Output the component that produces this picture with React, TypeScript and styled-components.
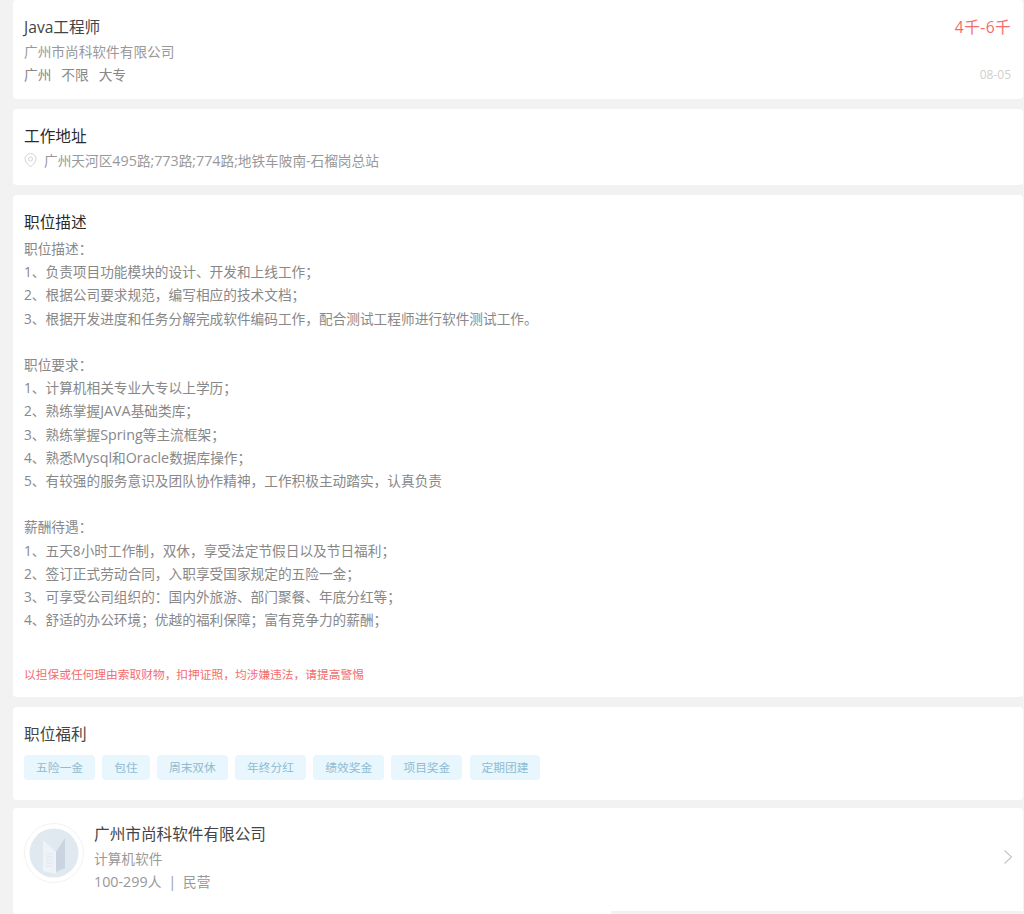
import React from "react";
import styled, { createGlobalStyle } from "styled-components";

const GlobalStyle = createGlobalStyle`
  html, body {
    margin: 0;
    padding: 0;
    height: 914px;
    overflow: hidden;
    background: #f2f2f2;
    font-family: "Open Sans", "Noto Sans CJK SC", sans-serif;
  }
`;

const Page = styled.div`
  display: flex;
  flex-direction: column;
  gap: 10px;
  height: 914px;
  padding: 0 1px 0 13px;
  box-sizing: border-box;
  overflow: hidden;
`;

const Card = styled.section<{ $height: number }>`
  flex: none;
  box-sizing: border-box;
  height: ${({ $height }) => $height}px;
  padding: 15px 12px 0 11px;
  border-radius: 4px;
  background: #fff;
`;

const CompanyCard = styled(Card)`
  margin-top: -2px;
  padding-top: 16px;
`;

const HeaderRow = styled.div`
  display: flex;
  justify-content: space-between;
  align-items: flex-start;
`;

const JobTitle = styled.h1`
  margin: 0;
  font-size: 15.63px;
  line-height: 24px;
  font-weight: 400;
  color: #444;
`;

const Salary = styled.div`
  font-size: 15.63px;
  line-height: 24px;
  letter-spacing: 0.4px;
  color: #f56c6c;
`;

const Muted = styled.div`
  font-size: 13.68px;
  line-height: 23px;
  color: #999;
`;

const CompanyLine = styled(Muted)`
  margin-top: 1px;
  margin-bottom: -1px;
`;

const MetaRow = styled.div`
  display: flex;
  justify-content: space-between;
  align-items: flex-end;
`;

const MetaList = styled.div`
  display: flex;
  gap: 10px;
  font-size: 13.68px;
  line-height: 23px;
  margin-top: 1px;
  color: #888;
`;

const DateText = styled.div`
  font-size: 12px;
  line-height: 23px;
  color: #d0d0d0;
`;

const SectionTitle = styled.h2<{ $soft?: boolean }>`
  margin: 0;
  font-size: 15.63px;
  line-height: 24px;
  font-weight: 400;
  color: ${({ $soft }) => ($soft ? "#444" : "#2a2a2a")};
`;

const Address = styled.div`
  display: flex;
  align-items: center;
  gap: 7px;
  margin-top: 1px;
  font-size: 13.68px;
  line-height: 23px;
  color: #999;
`;

const Description = styled.div`
  margin-top: 3px;
  font-size: 13.68px;
  line-height: 23.2px;
  color: #888;
  white-space: pre-line;
`;

// Latin runs are set a touch larger than the CJK text around them
const Latin = styled.span`
  font-size: 14.3px;
`;

const Warning = styled.div`
  margin-top: 33px;
  font-size: 11.72px;
  line-height: 20px;
  color: #f56c6c;
`;

const Tags = styled.div`
  display: flex;
  gap: 7.3px;
  margin-top: 9px;
`;

const Tag = styled.span`
  padding: 0 12px;
  height: 25px;
  border-radius: 4px;
  background: #e8f6fd;
  font-size: 11.72px;
  line-height: 25px;
  color: #8fbcd2;
`;

const CompanyRow = styled.div`
  display: flex;
  align-items: flex-start;
  gap: 10px;
`;

const Logo = styled.div`
  flex: none;
  box-sizing: border-box;
  display: flex;
  align-items: center;
  justify-content: center;
  width: 60px;
  height: 60px;
  margin-top: -1px;
  border: 1px solid #f4f2f0;
  border-radius: 50%;
`;

const CompanyInfo = styled.div`
  flex: 1;
  margin-top: -3px;
`;

const CompanyName = styled.div`
  font-size: 15.63px;
  line-height: 26px;
  color: #444;
`;

const Chevron = styled.svg`
  flex: none;
  margin: 25px -2px 0 0;
`;

const BottomEdge = styled.div`
  position: fixed;
  left: 611px;
  right: 0;
  bottom: 0;
  height: 3px;
  background: #f2f2f2;
`;

const description = `职位描述：
1、负责项目功能模块的设计、开发和上线工作；
2、根据公司要求规范，编写相应的技术文档；
3、根据开发进度和任务分解完成软件编码工作，配合测试工程师进行软件测试工作。

职位要求：
1、计算机相关专业大专以上学历；
2、熟练掌握JAVA基础类库；
3、熟练掌握Spring等主流框架；
4、熟悉Mysql和Oracle数据库操作；
5、有较强的服务意识及团队协作精神，工作积极主动踏实，认真负责

薪酬待遇：
1、五天8小时工作制，双休，享受法定节假日以及节日福利；
2、签订正式劳动合同，入职享受国家规定的五险一金；
3、可享受公司组织的：国内外旅游、部门聚餐、年底分红等；
4、舒适的办公环境；优越的福利保障；富有竞争力的薪酬；`;

const benefits = ["五险一金", "包住", "周末双休", "年终分红", "绩效奖金", "项目奖金", "定期团建"];

const withLatin = (text: string) =>
  text.split(/([A-Za-z]{2,}|\d{2,})/).map((part, i) => (i % 2 ? <Latin key={i}>{part}</Latin> : part));

export default function App() {
  return (
    <>
      <GlobalStyle />
      <Page>
        <Card $height={99}>
          <HeaderRow>
            <JobTitle>Java工程师</JobTitle>
            <Salary>4千-6千</Salary>
          </HeaderRow>
          <CompanyLine>广州市尚科软件有限公司</CompanyLine>
          <MetaRow>
            <MetaList>
              <span>广州</span>
              <span>不限</span>
              <span>大专</span>
            </MetaList>
            <DateText>08-05</DateText>
          </MetaRow>
        </Card>
        <Card $height={76}>
          <SectionTitle>工作地址</SectionTitle>
          <Address>
            <svg width="13" height="15" viewBox="0 0 13 15" fill="none" stroke="#d4d4d4" strokeWidth="1">
              <path d="M6.5 14C3.5 11 1 8.6 1 6a5.5 5.5 0 0 1 11 0c0 2.6-2.5 5-5.5 8Z" />
              <circle cx="6.5" cy="6" r="2" />
            </svg>
            <span>{withLatin("广州天河区495路;773路;774路;地铁车陂南-石榴岗总站")}</span>
          </Address>
        </Card>
        <Card $height={502}>
          <SectionTitle>职位描述</SectionTitle>
          <Description>{withLatin(description)}</Description>
          <Warning>以担保或任何理由索取财物，扣押证照，均涉嫌违法，请提高警惕</Warning>
        </Card>
        <Card $height={93}>
          <SectionTitle $soft>职位福利</SectionTitle>
          <Tags>
            {benefits.map((b) => (
              <Tag key={b}>{b}</Tag>
            ))}
          </Tags>
        </Card>
        <CompanyCard $height={106}>
          <CompanyRow>
            <Logo>
              <svg width="50" height="50" viewBox="0 0 50 50">
                <circle cx="25" cy="25" r="24.5" fill="#e0e8f0" />
                <path d="M14 12 L27 24 V46 L14 43 Z" fill="#eef3f8" />
                <path d="M27 24 L36 10 V40 L27 44 Z" fill="#c9d4e0" />
                <path d="M17 26h7M17 29h7M17 32h7M17 35h7M17 38h7" stroke="#dfe7ef" strokeWidth="1" />
              </svg>
            </Logo>
            <CompanyInfo>
              <CompanyName>广州市尚科软件有限公司</CompanyName>
              <Muted>计算机软件</Muted>
              <Muted>
                <Latin>100-299</Latin>人 &nbsp;|&nbsp; 民营
              </Muted>
            </CompanyInfo>
            <Chevron width="10" height="16" viewBox="0 0 10 16" fill="none" stroke="#c4c4c4" strokeWidth="1.1">
              <path d="M1.5 1.5 8.5 8 1.5 14.5" />
            </Chevron>
          </CompanyRow>
        </CompanyCard>
      </Page>
      <BottomEdge />
    </>
  );
}
